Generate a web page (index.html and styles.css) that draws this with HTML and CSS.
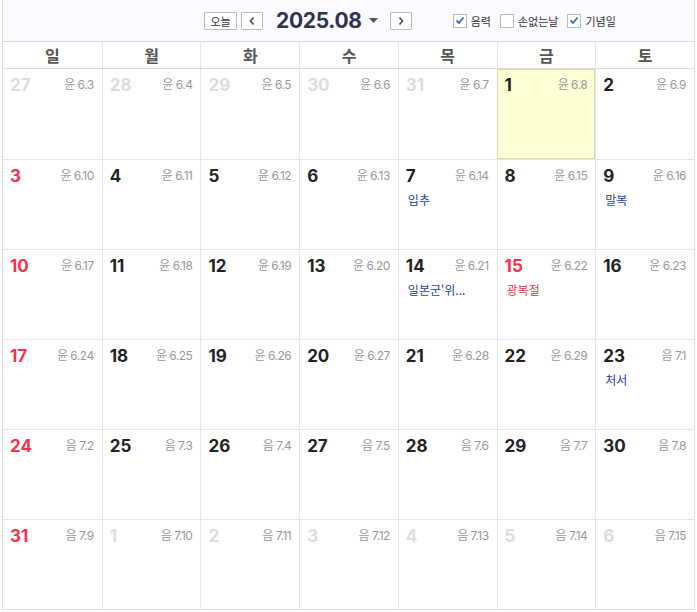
FILE: index.html
```html
<!DOCTYPE html>
<html lang="ko">
<head>
  <meta charset="UTF-8">
  <title>달력 2025.08</title>
  <link rel="stylesheet" href="styles.css">
</head>
<body>
  <div class="calendar">
    <!-- 상단 컨트롤 -->
    <div class="toolbar">
      <div class="nav">
        <button class="btn btn-today">오늘</button>
        <button class="btn btn-arrow">
          <svg width="8" height="10" viewBox="0 0 8 10"><path d="M5.5 1.5 L2.5 5 L5.5 8.5" fill="none" stroke="#555" stroke-width="1.8"/></svg>
        </button>
        <span class="month">2025.08</span>
        <svg class="caret" width="9" height="5" viewBox="0 0 9 5"><path d="M0 0 H9 L4.5 5 Z" fill="#555"/></svg>
        <button class="btn btn-arrow btn-next">
          <svg width="8" height="10" viewBox="0 0 8 10"><path d="M2.5 1.5 L5.5 5 L2.5 8.5" fill="none" stroke="#555" stroke-width="1.8"/></svg>
        </button>
      </div>
      <div class="options">
        <label class="opt"><span class="box checked"><svg width="10" height="9" viewBox="0 0 10 9"><path d="M1.5 4.5 L4 7 L8.5 1.5" fill="none" stroke="#2f6fb4" stroke-width="1.8"/></svg></span>음력</label>
        <label class="opt"><span class="box"></span>손없는날</label>
        <label class="opt"><span class="box checked"><svg width="10" height="9" viewBox="0 0 10 9"><path d="M1.5 4.5 L4 7 L8.5 1.5" fill="none" stroke="#2f6fb4" stroke-width="1.8"/></svg></span>기념일</label>
      </div>
    </div>

    <!-- 요일 -->
    <div class="weekdays">
      <div>일</div><div>월</div><div>화</div><div>수</div><div>목</div><div>금</div><div>토</div>
    </div>

    <!-- 날짜 -->
    <div class="days">
      <div class="day other"><span class="num">27</span><span class="lunar">윤 6.3</span></div>
      <div class="day other"><span class="num">28</span><span class="lunar">윤 6.4</span></div>
      <div class="day other"><span class="num">29</span><span class="lunar">윤 6.5</span></div>
      <div class="day other"><span class="num">30</span><span class="lunar">윤 6.6</span></div>
      <div class="day other"><span class="num">31</span><span class="lunar">윤 6.7</span></div>
      <div class="day today"><span class="num">1</span><span class="lunar">윤 6.8</span></div>
      <div class="day"><span class="num">2</span><span class="lunar">윤 6.9</span></div>

      <div class="day sun"><span class="num">3</span><span class="lunar">윤 6.10</span></div>
      <div class="day"><span class="num">4</span><span class="lunar">윤 6.11</span></div>
      <div class="day"><span class="num">5</span><span class="lunar">윤 6.12</span></div>
      <div class="day"><span class="num">6</span><span class="lunar">윤 6.13</span></div>
      <div class="day"><span class="num">7</span><span class="lunar">윤 6.14</span><span class="event">입추</span></div>
      <div class="day"><span class="num">8</span><span class="lunar">윤 6.15</span></div>
      <div class="day"><span class="num">9</span><span class="lunar">윤 6.16</span><span class="event">말복</span></div>

      <div class="day sun"><span class="num">10</span><span class="lunar">윤 6.17</span></div>
      <div class="day"><span class="num">11</span><span class="lunar">윤 6.18</span></div>
      <div class="day"><span class="num">12</span><span class="lunar">윤 6.19</span></div>
      <div class="day"><span class="num">13</span><span class="lunar">윤 6.20</span></div>
      <div class="day"><span class="num">14</span><span class="lunar">윤 6.21</span><span class="event">일본군'위...</span></div>
      <div class="day sun"><span class="num">15</span><span class="lunar">윤 6.22</span><span class="event holiday">광복절</span></div>
      <div class="day"><span class="num">16</span><span class="lunar">윤 6.23</span></div>

      <div class="day sun"><span class="num">17</span><span class="lunar">윤 6.24</span></div>
      <div class="day"><span class="num">18</span><span class="lunar">윤 6.25</span></div>
      <div class="day"><span class="num">19</span><span class="lunar">윤 6.26</span></div>
      <div class="day"><span class="num">20</span><span class="lunar">윤 6.27</span></div>
      <div class="day"><span class="num">21</span><span class="lunar">윤 6.28</span></div>
      <div class="day"><span class="num">22</span><span class="lunar">윤 6.29</span></div>
      <div class="day"><span class="num">23</span><span class="lunar">음 7.1</span><span class="event">처서</span></div>

      <div class="day sun"><span class="num">24</span><span class="lunar">음 7.2</span></div>
      <div class="day"><span class="num">25</span><span class="lunar">음 7.3</span></div>
      <div class="day"><span class="num">26</span><span class="lunar">음 7.4</span></div>
      <div class="day"><span class="num">27</span><span class="lunar">음 7.5</span></div>
      <div class="day"><span class="num">28</span><span class="lunar">음 7.6</span></div>
      <div class="day"><span class="num">29</span><span class="lunar">음 7.7</span></div>
      <div class="day"><span class="num">30</span><span class="lunar">음 7.8</span></div>

      <div class="day sun"><span class="num">31</span><span class="lunar">음 7.9</span></div>
      <div class="day other"><span class="num">1</span><span class="lunar">음 7.10</span></div>
      <div class="day other"><span class="num">2</span><span class="lunar">음 7.11</span></div>
      <div class="day other"><span class="num">3</span><span class="lunar">음 7.12</span></div>
      <div class="day other"><span class="num">4</span><span class="lunar">음 7.13</span></div>
      <div class="day other"><span class="num">5</span><span class="lunar">음 7.14</span></div>
      <div class="day other"><span class="num">6</span><span class="lunar">음 7.15</span></div>
    </div>
  </div>
</body>
</html>
```

FILE: styles.css
```css
body {
  margin: 0;
  background-color: #fff;
  font-family: Inter, "Noto Sans CJK KR", sans-serif;
  color: #222;
}

.calendar {
  margin: 0 2px;
  border-left: 1px solid #ddd;
  border-right: 1px solid #ddd;
  border-bottom: 1px solid #ddd;
}

/* 상단 컨트롤 */
.toolbar {
  height: 41px;
  background-color: #fbfafe;
  border-bottom: 1px solid #ddd;
  display: flex;
  align-items: center;
}

.nav {
  display: flex;
  align-items: center;
  margin-left: 201px;
}

.btn {
  height: 18px;
  padding: 0;
  border: 1px solid #b9bcc4;
  background-color: #fff;
  display: flex;
  align-items: center;
  justify-content: center;
  font-family: "Noto Sans CJK KR", sans-serif;
  font-size: 11px;
  color: #333;
  border-radius: 1px;
}

.btn-today {
  width: 33px;
  margin-right: 4px;
}

.btn-arrow {
  width: 22px;
}

.month {
  margin-left: 13px;
  font-size: 21px;
  font-weight: 700;
  color: #2f3350;
  letter-spacing: -0.3px;
}

.caret {
  margin-left: 7px;
}

.btn-next {
  margin-left: 12px;
}

.options {
  display: flex;
  align-items: center;
  margin-left: 41px;
  font-family: "Noto Sans CJK KR", sans-serif;
  font-size: 11px;
  color: #333;
}

.opt {
  display: flex;
  align-items: center;
  margin-right: 9px;
}

.box {
  width: 12px;
  height: 12px;
  border: 1px solid #bbb;
  background-color: #fff;
  margin-right: 4px;
  display: flex;
  align-items: center;
  justify-content: center;
}

/* 요일 */
.weekdays {
  display: grid;
  grid-template-columns: repeat(7, 1fr);
  height: 26px;
  border-bottom: 1px solid #ddd;
}

.weekdays div {
  display: flex;
  align-items: center;
  justify-content: center;
  font-family: "Noto Sans CJK KR", sans-serif;
  font-size: 16px;
  font-weight: 700;
  color: #555;
  border-left: 1px solid #e6e6e6;
}

.weekdays div:first-child {
  border-left: none;
}

/* 날짜 칸 */
.days {
  display: grid;
  grid-template-columns: repeat(7, 1fr);
  grid-auto-rows: 90px;
}

.day {
  border-left: 1px solid #e6e6e6;
  border-top: 1px solid #e6e6e6;
  padding: 4px 8px 0 7px;
  display: flex;
  flex-wrap: wrap;
  align-content: flex-start;
  justify-content: space-between;
}

.day:nth-child(7n+1) {
  border-left: none;
}

.day:nth-child(-n+7) {
  border-top: none;
}

.num {
  font-size: 17px;
  font-weight: 700;
  color: #222;
  line-height: 24px;
}

.lunar {
  font-size: 12px;
  color: #999;
  line-height: 24px;
  letter-spacing: -0.5px;
}

.event {
  width: 100%;
  margin-top: 3px;
  padding-left: 2px;
  font-family: "Noto Sans CJK KR", sans-serif;
  font-size: 12px;
  color: #2242a8;
}

.event.holiday {
  color: #f0354a;
}

.sun .num {
  color: #f5324a;
}

.other .num {
  color: #ddd;
}

.today {
  background-color: #ffffd6;
  outline: 1px solid #dedcae;
  outline-offset: -1px;
}
```
